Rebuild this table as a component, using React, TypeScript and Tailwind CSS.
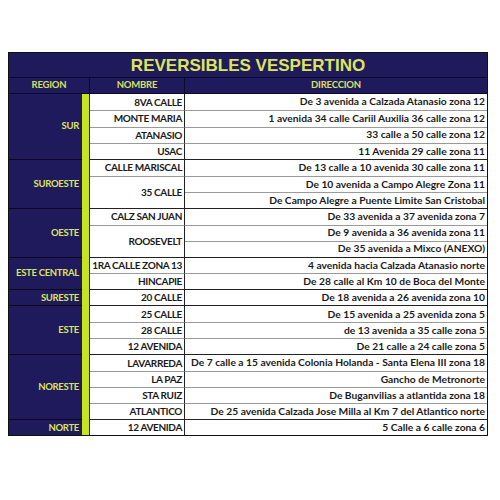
import React from "react";

type Group = {
  region: string;
  rows: { nombre?: string; span?: number; dir: string }[];
};

const GROUPS: Group[] = [
  {
    region: "SUR",
    rows: [
      { nombre: "8VA CALLE", dir: "De 3 avenida a Calzada Atanasio zona 12" },
      { nombre: "MONTE MARIA", dir: "1 avenida 34 calle Cariil Auxilia 36 calle zona 12" },
      { nombre: "ATANASIO", dir: "33 calle a 50 calle zona 12" },
      { nombre: "USAC", dir: "11 Avenida 29 calle zona 11" },
    ],
  },
  {
    region: "SUROESTE",
    rows: [
      { nombre: "CALLE MARISCAL", dir: "De 13 calle a 10 avenida 30 calle zona 11" },
      { nombre: "35 CALLE", span: 2, dir: "De 10 avenida a Campo Alegre Zona 11" },
      { dir: "De Campo Alegre a Puente Limite San Cristobal" },
    ],
  },
  {
    region: "OESTE",
    rows: [
      { nombre: "CALZ SAN JUAN", dir: "De 33 avenida a 37 avenida zona 7" },
      { nombre: "ROOSEVELT", span: 2, dir: "De 9 avenida a 36 avenida zona 11" },
      { dir: "De 35 avenida a Mixco (ANEXO)" },
    ],
  },
  {
    region: "ESTE CENTRAL",
    rows: [
      { nombre: "1RA CALLE ZONA 13", dir: "4 avenida hacia Calzada Atanasio norte" },
      { nombre: "HINCAPIE", dir: "De 28 calle al Km 10 de Boca del Monte" },
    ],
  },
  {
    region: "SURESTE",
    rows: [{ nombre: "20 CALLE", dir: "De 18 avenida a 26 avenida zona 10" }],
  },
  {
    region: "ESTE",
    rows: [
      { nombre: "25 CALLE", dir: "De 15 avenida a 25 avenida zona 5" },
      { nombre: "28 CALLE", dir: "de 13 avenida a 35 calle zona 5" },
      { nombre: "12 AVENIDA", dir: "De 21 calle a 24 calle zona 5" },
    ],
  },
  {
    region: "NORESTE",
    rows: [
      { nombre: "LAVARREDA", dir: "De 7 calle a 15 avenida Colonia Holanda - Santa Elena III zona 18" },
      { nombre: "LA PAZ", dir: "Gancho de Metronorte" },
      { nombre: "STA RUIZ", dir: "De Buganvilias a atlantida zona 18" },
      { nombre: "ATLANTICO", dir: "De 25 avenida Calzada Jose Milla al Km 7 del Atlantico norte" },
    ],
  },
  {
    region: "NORTE",
    rows: [{ nombre: "12 AVENIDA", dir: "5 Calle a 6 calle zona 6" }],
  },
];

const ROW_H = 16.25;

export default function App() {
  return (
    <div className="w-[500px] h-[500px] bg-white pt-[52px] pl-[8px] font-['Lato','Liberation_Sans',sans-serif]">
      <div className="w-[480px] border border-[#111] bg-[#1e1a5c]">
        <div className="h-[25px] flex items-center justify-center border-b border-[#0b0a2a]">
          <span className="font-['Liberation_Sans',sans-serif] font-bold text-[17px] text-[#dde65a] leading-none">
            REVERSIBLES VESPERTINO
          </span>
        </div>
        <div className="h-[16px] grid grid-cols-[81px_95px_minmax(0,1fr)] border-b border-[#0b0a2a] text-[9.5px] font-bold text-[#d9e05e] tracking-[-0.2px]">
          <div className="flex items-center justify-center border-r border-[#0b0a2a]">REGION</div>
          <div className="flex items-center justify-center border-r border-[#0b0a2a]">NOMBRE</div>
          <div className="flex items-center justify-center">DIRECCION</div>
        </div>
        <div className="flex">
          <div className="w-[73px] shrink-0 flex flex-col">
            {GROUPS.map((g, i) => (
              <div
                key={g.region}
                className={`flex items-center justify-end pr-[3px] whitespace-nowrap text-[9.5px] tracking-[-0.3px] font-bold text-[#dde25e] ${i > 0 ? "border-t border-[#0a0920]" : ""}`}
                style={{ height: g.rows.length * ROW_H }}
              >
                {g.region}
              </div>
            ))}
          </div>
          <div className="w-[8px] shrink-0 bg-[#c6e51c] border-r border-[#222]" />
          <div className="flex-1 min-w-0 flex flex-col bg-white text-[#1a1a1a] font-bold">
            {GROUPS.map((g, i) => (
              <div
                key={g.region}
                className={`grid grid-cols-[95px_minmax(0,1fr)] ${i > 0 ? "border-t border-[#222]" : ""}`}
                style={{ height: g.rows.length * ROW_H, gridTemplateRows: `repeat(${g.rows.length}, minmax(0, 1fr))` }}
              >
                {g.rows.map((r, j) => (
                  <React.Fragment key={j}>
                    {r.nombre && (
                      <div
                        className={`flex items-center justify-end pr-[2px] text-[10px] tracking-[-0.35px] border-r border-[#222] whitespace-nowrap ${j > 0 ? "border-t border-t-[#9a9a9a]" : ""}`}
                        style={{ gridRow: `${j + 1} / span ${r.span ?? 1}`, gridColumn: 1 }}
                      >
                        {r.nombre}
                      </div>
                    )}
                    <div
                      className={`flex items-center justify-end pr-[2px] text-[10.25px] whitespace-nowrap ${j > 0 ? "border-t border-t-[#9a9a9a]" : ""}`}
                      style={{ gridRow: j + 1, gridColumn: 2 }}
                    >
                      {r.dir}
                    </div>
                  </React.Fragment>
                ))}
              </div>
            ))}
          </div>
        </div>
      </div>
    </div>
  );
}
